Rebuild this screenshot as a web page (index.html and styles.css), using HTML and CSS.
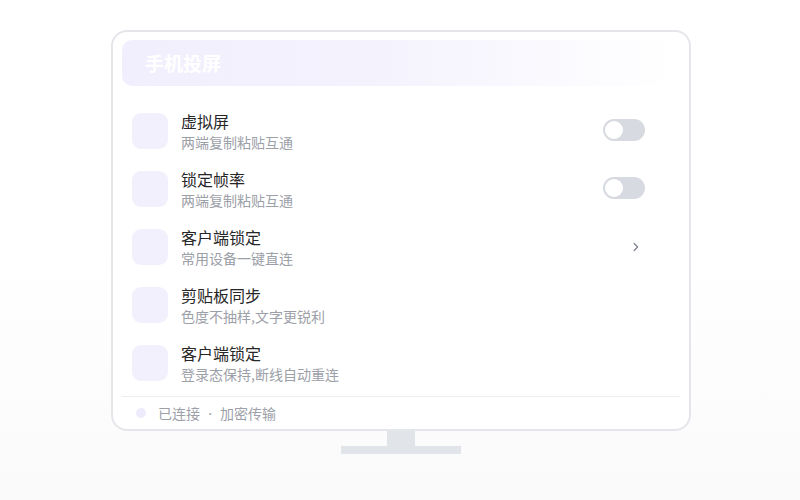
FILE: index.html
```html
<!DOCTYPE html>
<html lang="zh">
<head>
<meta charset="utf-8">
<link rel="stylesheet" href="styles.css">
</head>
<body>
<div class="stage">
  <div class="monitor">
    <div class="header">手机投屏</div>
    <div class="list">
      <div class="row">
        <div class="icon"></div>
        <div class="texts"><div class="title">虚拟屏</div><div class="sub">两端复制粘贴互通</div></div>
        <div class="toggle"><span class="knob"></span></div>
      </div>
      <div class="row">
        <div class="icon"></div>
        <div class="texts"><div class="title">锁定帧率</div><div class="sub">两端复制粘贴互通</div></div>
        <div class="toggle"><span class="knob"></span></div>
      </div>
      <div class="row">
        <div class="icon"></div>
        <div class="texts"><div class="title">客户端锁定</div><div class="sub">常用设备一键直连</div></div>
        <svg class="chev" width="8" height="12" viewBox="0 0 8 12"><path d="M2.2 2.5 L5.6 6 L2.2 9.5" fill="none" stroke="#7b808a" stroke-width="1.2" stroke-linecap="round" stroke-linejoin="round"/></svg>
      </div>
      <div class="row">
        <div class="icon"></div>
        <div class="texts"><div class="title">剪贴板同步</div><div class="sub">色度不抽样,文字更锐利</div></div>
      </div>
      <div class="row">
        <div class="icon"></div>
        <div class="texts"><div class="title">客户端锁定</div><div class="sub">登录态保持,断线自动重连</div></div>
      </div>
    </div>
    <div class="footer"><span class="dot"></span>已连接<span class="sep"> · </span>加密传输</div>
  </div>
  <div class="neck"></div>
  <div class="base"></div>
</div>
</body>
</html>
```

FILE: styles.css
```css
* { box-sizing: border-box; }
html, body { margin: 0; padding: 0; }
body {
  width: 800px;
  height: 500px;
  background: linear-gradient(180deg, #ffffff 0%, #ffffff 50%, #fafafa 100%);
  font-family: "Noto Sans CJK SC", "Noto Sans", sans-serif;
  overflow: hidden;
}
.stage {
  display: flex;
  flex-direction: column;
  align-items: center;
  padding-top: 30px;
  padding-left: 2px;
}
.monitor {
  width: 580px;
  height: 401px;
  border: 2px solid #e4e6ea;
  border-radius: 16px;
  background: #ffffff;
  padding: 8px 9px 0 9px;
  display: flex;
  flex-direction: column;
}
.header {
  height: 46px;
  border-radius: 10px;
  background: linear-gradient(90deg, #f1effd 0%, #f4f2fd 45%, #fdfdff 90%, #ffffff 100%);
  color: #ffffff;
  font-size: 19px;
  font-weight: 700;
  line-height: 46px;
  padding-left: 23px;
}
.list {
  padding-top: 16px;
  display: flex;
  flex-direction: column;
}
.row {
  height: 58px;
  display: flex;
  align-items: center;
  padding: 0 35px 0 10px;
}
.icon {
  width: 36px;
  height: 36px;
  border-radius: 9px;
  background: #f2f0fd;
  flex: none;
}
.texts {
  margin-left: 13px;
  flex: 1;
  display: flex;
  flex-direction: column;
}
.title {
  font-size: 16px;
  line-height: 20px;
  color: #262626;
}
.sub {
  font-size: 14px;
  line-height: 20px;
  color: #9ca0a8;
  margin-top: 1px;
}
.toggle {
  width: 42px;
  height: 22px;
  border-radius: 11px;
  background: #d7dae0;
  padding: 2px;
  display: flex;
  align-items: center;
  margin-bottom: 2px;
}
.knob {
  width: 18px;
  height: 18px;
  border-radius: 50%;
  background: #ffffff;
}
.chev {
  margin-right: 5px;
}
.footer {
  margin-top: 4px;
  border-top: 1px solid #eceef1;
  height: 34px;
  display: flex;
  align-items: center;
  padding-left: 14px;
  font-size: 14px;
  color: #9ca0a8;
  white-space: pre;
}
.sep {
  font-family: "Noto Sans", sans-serif;
  margin: 0 4.5px;
}
.dot {
  width: 10px;
  height: 10px;
  border-radius: 50%;
  background: #eeebfd;
  margin-right: 12px;
}
.neck {
  width: 28px;
  height: 15px;
  background: #e1e4e9;
}
.base {
  width: 120px;
  height: 8px;
  background: #e1e4e9;
}
```
